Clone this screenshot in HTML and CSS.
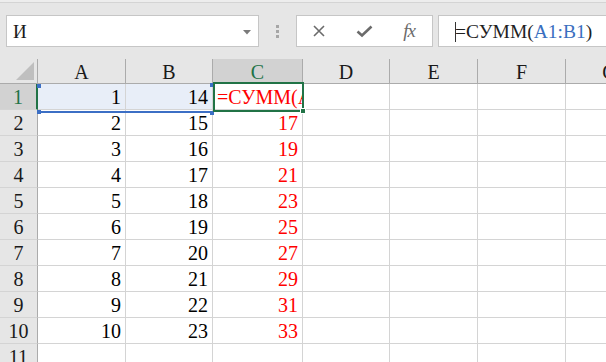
FILE: index.html
```html
<!DOCTYPE html>
<html>
<head>
    <title>Excel - СУММ</title>
    <meta charset="UTF-8">
    <link rel="stylesheet" href="styles.css">
</head>
<body>
    <div class="topline"></div>

    <div class="toolbar">
        <div class="namebox">
            <span>И</span>
            <svg class="drop" width="8" height="5" viewBox="0 0 8 5"><path d="M0 0 L8 0 L4 4.5 Z" fill="#7a7a7a"/></svg>
        </div>
        <div class="grip"><i></i><i></i><i></i></div>
        <div class="fxbuttons">
            <svg width="14" height="14" viewBox="0 0 14 14"><path d="M2 2 L12 12 M12 2 L2 12" stroke="#6b6b6b" stroke-width="1.6"/></svg>
            <svg width="17" height="14" viewBox="0 0 17 14"><path d="M1.5 7.5 L6 11.5 L15.5 2.5" fill="none" stroke="#6b6b6b" stroke-width="2.6"/></svg>
            <span class="fx">fx</span>
        </div>
        <div class="formula"><span class="caret"></span>=СУММ(<span class="ref">A1:B1</span>)</div>
    </div>

    <div class="sheet">
        <div class="row hdr">
            <div class="corner"><svg width="18" height="18" viewBox="0 0 18 18"><path d="M18 0 L18 18 L0 18 Z" fill="#bfbfbf"/></svg></div>
            <div class="ch">A</div>
            <div class="ch">B</div>
            <div class="ch sel">C</div>
            <div class="ch">D</div>
            <div class="ch">E</div>
            <div class="ch">F</div>
            <div class="ch">G</div>
        </div>
        <div class="row">
            <div class="rh sel">1</div>
            <div class="c range">1</div>
            <div class="c range">14</div>
            <div class="c red edit">=СУММ(A1:B1)</div>
            <div class="c"></div><div class="c"></div><div class="c"></div><div class="c"></div>
        </div>
        <div class="row">
            <div class="rh">2</div><div class="c">2</div><div class="c">15</div><div class="c red">17</div>
            <div class="c"></div><div class="c"></div><div class="c"></div><div class="c"></div>
        </div>
        <div class="row">
            <div class="rh">3</div><div class="c">3</div><div class="c">16</div><div class="c red">19</div>
            <div class="c"></div><div class="c"></div><div class="c"></div><div class="c"></div>
        </div>
        <div class="row">
            <div class="rh">4</div><div class="c">4</div><div class="c">17</div><div class="c red">21</div>
            <div class="c"></div><div class="c"></div><div class="c"></div><div class="c"></div>
        </div>
        <div class="row">
            <div class="rh">5</div><div class="c">5</div><div class="c">18</div><div class="c red">23</div>
            <div class="c"></div><div class="c"></div><div class="c"></div><div class="c"></div>
        </div>
        <div class="row">
            <div class="rh">6</div><div class="c">6</div><div class="c">19</div><div class="c red">25</div>
            <div class="c"></div><div class="c"></div><div class="c"></div><div class="c"></div>
        </div>
        <div class="row">
            <div class="rh">7</div><div class="c">7</div><div class="c">20</div><div class="c red">27</div>
            <div class="c"></div><div class="c"></div><div class="c"></div><div class="c"></div>
        </div>
        <div class="row">
            <div class="rh">8</div><div class="c">8</div><div class="c">21</div><div class="c red">29</div>
            <div class="c"></div><div class="c"></div><div class="c"></div><div class="c"></div>
        </div>
        <div class="row">
            <div class="rh">9</div><div class="c">9</div><div class="c">22</div><div class="c red">31</div>
            <div class="c"></div><div class="c"></div><div class="c"></div><div class="c"></div>
        </div>
        <div class="row">
            <div class="rh">10</div><div class="c">10</div><div class="c">23</div><div class="c red">33</div>
            <div class="c"></div><div class="c"></div><div class="c"></div><div class="c"></div>
        </div>
        <div class="row">
            <div class="rh">11</div><div class="c"></div><div class="c"></div><div class="c"></div>
            <div class="c"></div><div class="c"></div><div class="c"></div><div class="c"></div>
        </div>

        <!-- reference range A1:B1 -->
        <div class="refbox">
            <i class="h tl"></i><i class="h tr"></i><i class="h bl"></i><i class="h br"></i>
        </div>
        <!-- active cell C1 -->
        <div class="active"><i class="fill"></i></div>
    </div>
</body>
</html>
```

FILE: styles.css
```css
html, body {
    overflow: hidden;
}
body {
    margin: 0;
    background-color: #e6e6e6;
    font-family: "Liberation Serif", "DejaVu Serif", serif;
    color: #000;
    width: 606px;
    height: 362px;
}
.topline {
    height: 2px;
    background-color: #ededed;
    border-bottom: 1px solid #d4d4d4;
}
.toolbar {
    display: flex;
    align-items: center;
    height: 32px;
    margin: 12px 0;
    padding-left: 6px;
}
.namebox {
    box-sizing: border-box;
    width: 253px;
    height: 32px;
    background-color: #fff;
    border: 1px solid #c6c6c6;
    display: flex;
    align-items: center;
    justify-content: space-between;
    padding: 0 7px 0 6px;
    font-family: "Liberation Serif", serif;
    font-size: 19px;
}
.namebox span {
    color: #1a1a1a;
    padding-top: 2px;
}
.drop {
    margin-top: 2px;
}
.grip {
    display: flex;
    flex-direction: column;
    gap: 2px;
    margin: 0 17px 0 17px;
}
.grip i {
    display: block;
    width: 3px;
    height: 3px;
    background-color: #a6a6a6;
}
.fxbuttons {
    box-sizing: border-box;
    width: 137px;
    height: 32px;
    background-color: #fff;
    border: 1px solid #c6c6c6;
    display: flex;
    align-items: center;
    justify-content: space-around;
}
.fx {
    font-family: "Liberation Serif", serif;
    font-style: italic;
    font-size: 19px;
    color: #6b6b6b;
    letter-spacing: -1px;
    padding-right: 2px;
}
.formula {
    box-sizing: border-box;
    flex: 1;
    margin-left: 5px;
    margin-right: -10px;
    height: 32px;
    background-color: #fff;
    border: 1px solid #c6c6c6;
    padding-left: 16px;
    font-family: "Liberation Serif", serif;
    font-size: 19.5px;
    line-height: 31px;
    color: #1f1f1f;
    white-space: nowrap;
}
.caret {
    display: inline-block;
    vertical-align: -4px;
    width: 1px;
    height: 20px;
    background-color: #333;
    margin-right: -1px;
}
.ref {
    color: #3a6fc0;
}

/* grid */
.sheet {
    position: relative;
    width: 654px;
}
.row {
    display: grid;
    grid-template-columns: 38px 88px 87px 90px 87px 88px 88px 88px;
    height: 26px;
}
.row.hdr {
    height: 25px;
}
.row > div {
    box-sizing: border-box;
    border-right: 1px solid #d4d4d4;
    border-bottom: 1px solid #d4d4d4;
    font-family: "Liberation Serif", serif;
    font-size: 20px;
    white-space: nowrap;
    overflow: hidden;
}
.hdr > div {
    background-color: #e6e6e6;
    border-right-color: #ababab;
    border-bottom-color: #ababab;
    text-align: center;
    line-height: 26px;
    color: #1a1a1a;
}
.hdr .corner {
    position: relative;
}
.corner svg {
    position: absolute;
    right: 3px;
    bottom: 3px;
}
.ch.sel,
.rh.sel {
    background-color: #d2d2d2;
    color: #217346;
}
.row .rh {
    background-color: #e6e6e6;
    border-right-color: #ababab;
    text-align: center;
    line-height: 24px;
    padding-top: 1px;
    color: #1a1a1a;
}
.row .rh.sel {
    background-color: #d2d2d2;
    color: #217346;
    border-right: 2px solid #217346;
}
.c {
    text-align: right;
    padding: 1px 4px 0 0;
    line-height: 24px;
    background-color: #fff;
}
.c.range {
    background-color: #e8eef8;
}
.c.red {
    color: #ff0000;
}
.c.edit {
    text-align: left;
    padding-left: 4px;
    text-overflow: clip;
}

/* overlays */
.refbox {
    position: absolute;
    left: 37px;
    top: 25px;
    width: 177px;
    height: 27px;
    border-bottom: 2px solid #3c6fc5;
}
.refbox .h {
    position: absolute;
    width: 4px;
    height: 4px;
    background-color: #3c6fc5;
}
.refbox .tl { left: 0; top: 0; }
.refbox .tr { right: 0; top: -1px; }
.refbox .bl { left: 0; bottom: -3px; }
.refbox .br { right: 0; bottom: -4px; }
.active {
    position: absolute;
    left: 213px;
    top: 23px;
    width: 87px;
    height: 26px;
    border: 2px solid #217346;
}
.active .fill {
    position: absolute;
    right: -4px;
    bottom: -4px;
    width: 4px;
    height: 4px;
    background-color: #217346;
    border: 1px solid #fff;
}
```
